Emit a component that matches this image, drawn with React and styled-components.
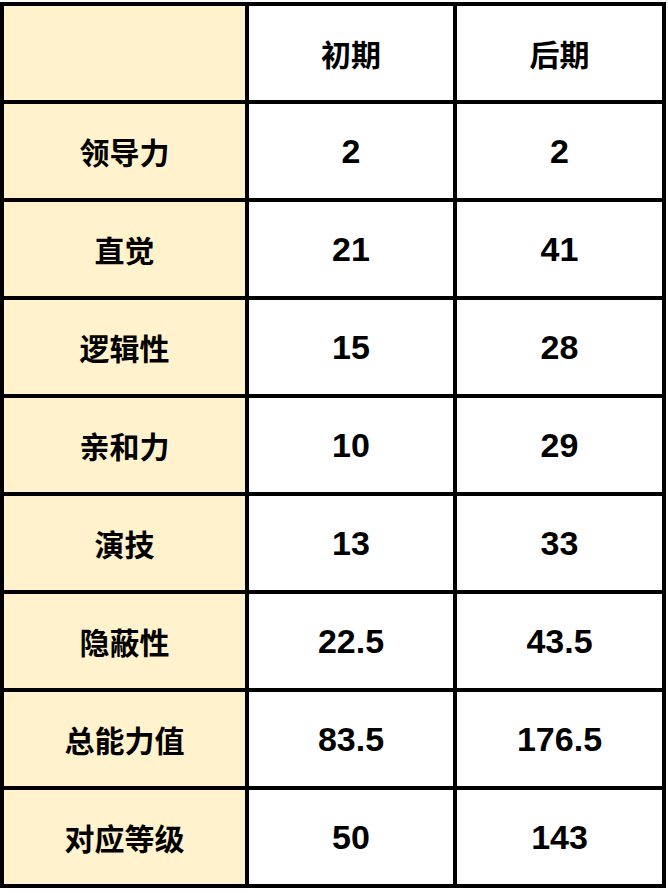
import React from "react";
import styled, { createGlobalStyle } from "styled-components";

const GlobalStyle = createGlobalStyle`
  html, body {
    margin: 0;
    padding: 0;
    background: #ffffff;
  }
  body {
    font-family: "Liberation Sans", "Noto Sans CJK SC", sans-serif;
  }
`;

const rows = [
  ["领导力", "2", "2"],
  ["直觉", "21", "41"],
  ["逻辑性", "15", "28"],
  ["亲和力", "10", "29"],
  ["演技", "13", "33"],
  ["隐蔽性", "22.5", "43.5"],
  ["总能力值", "83.5", "176.5"],
  ["对应等级", "50", "143"],
];

const App = () => {
  return (
    <>
      <GlobalStyle />
      <Page>
        <Grid>
          <Cell $label />
          <Cell>初期</Cell>
          <Cell>后期</Cell>
          {rows.map(([name, early, late]) => (
            <React.Fragment key={name}>
              <Cell $label>{name}</Cell>
              <Cell $num>{early}</Cell>
              <Cell $num>{late}</Cell>
            </React.Fragment>
          ))}
        </Grid>
      </Page>
    </>
  );
};

const Page = styled.div`
  padding-top: 2px;
  width: 668px;
`;

const Grid = styled.div`
  display: grid;
  grid-template-columns: 241px 204px 205px;
  grid-auto-rows: 94px;
  gap: 4px;
  padding: 4px;
  width: max-content;
  background: #000000;
`;

const Cell = styled.div`
  display: flex;
  align-items: center;
  justify-content: center;
  background: ${(props) => (props.$label ? "#fff2cc" : "#ffffff")};
  color: #000000;
  font-weight: 700;
  font-size: ${(props) => (props.$num ? "34px" : "30px")};
  font-family: "Liberation Sans", "Noto Sans CJK SC", sans-serif;
`;

export default App;
